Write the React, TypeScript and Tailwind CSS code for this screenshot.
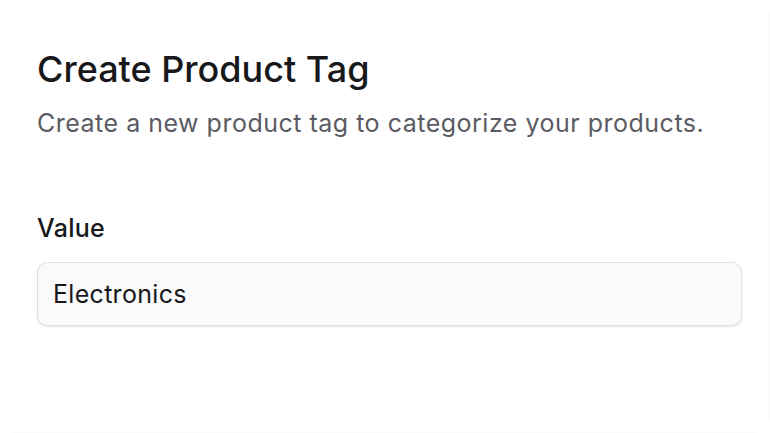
import React from 'react';

const App: React.FC = () => {
  return (
    <div
      className="w-[770px] h-[433px] bg-white overflow-hidden"
      style={{ fontFamily: 'Inter, "Noto Sans", sans-serif' }}
    >
      <div className="h-full rounded-2xl border border-[#fbfbfb] bg-white pl-[36px] pr-[27px] pt-[50px]">
        <h2 className="text-[36px] leading-[36px] font-medium text-[#18181b]">Create Product Tag</h2>
        <p className="mt-[18px] text-[25px] leading-[36px] tracking-[0.5px] text-[#5b5b63]">
          Create a new product tag to categorize your products.
        </p>

        <div className="mt-[75px]">
          <label className="block text-[25px] leading-[24px] tracking-[0.3px] font-medium text-[#18181b]">Value</label>
          <input
            type="text"
            defaultValue="Electronics"
            className="mt-[22px] block w-full h-[64px] rounded-[10px] border border-[#e0e0e2] bg-[#fafafa] px-[15px] text-[25px] tracking-[0.3px] text-[#18181b] shadow-[0_1px_2px_rgba(0,0,0,0.1)] outline-none"
          />
        </div>
      </div>
    </div>
  );
};

export default App;
